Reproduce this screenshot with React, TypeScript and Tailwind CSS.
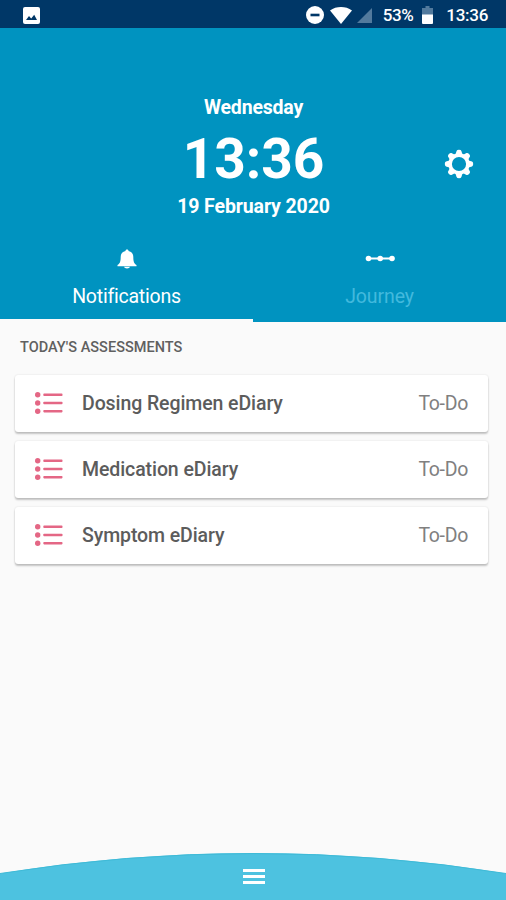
import { useState } from "react";
import clsx from "clsx";

type Tab = "notifications" | "journey";

interface Assessment {
  id: number;
  title: string;
  status: string;
}

const assessments: Assessment[] = [
  { id: 1, title: "Dosing Regimen eDiary", status: "To-Do" },
  { id: 2, title: "Medication eDiary", status: "To-Do" },
  { id: 3, title: "Symptom eDiary", status: "To-Do" },
];

function StatusBar() {
  return (
    <div className="flex h-7 shrink-0 items-center bg-[#003767] pt-[2px] pr-[18px] pl-[23px] text-white">
      <svg width="17" height="17" viewBox="0 0 17 17" aria-hidden="true">
        <rect width="17" height="17" rx="2" fill="#fff" />
        <path d="M3 13l3-4 2.200 2.600 3-3.900L14 13z" fill="#003767" />
      </svg>

      <div className="ml-auto flex items-center">
        <svg width="18" height="18" viewBox="0 0 18 18" aria-hidden="true">
          <circle cx="9" cy="9" r="9" fill="#fff" />
          <rect x="4.500" y="7.700" width="9" height="2.600" fill="#003767" />
        </svg>
        <svg className="ml-[6px]" width="22" height="17" viewBox="0 0 22 17" aria-hidden="true">
          <path d="M0 3.500C6.300-1.100 15.700-1.100 22 3.500L11 17z" fill="#fff" />
        </svg>
        <svg className="ml-[5px]" width="15" height="15" viewBox="0 0 15 15" aria-hidden="true">
          <path d="M15 0v15H0z" fill="#527a9d" />
        </svg>
        <span className="ml-[11px] text-[17px] leading-5 font-medium tracking-[-0.4px]">53%</span>
        <svg className="ml-[9px]" width="11" height="18" viewBox="0 0 11 18" aria-hidden="true">
          <path d="M3.500 0h4v2H11v7H0V2h3.500z" fill="#527a9d" />
          <path d="M0 8.500h11V17a1 1 0 0 1-1 1H1a1 1 0 0 1-1-1z" fill="#fff" />
        </svg>
        <span className="ml-[13px] text-[17px] leading-5 font-medium tracking-[-0.3px]">13:36</span>
      </div>
    </div>
  );
}

function GearIcon() {
  return (
    <svg width="30" height="30" viewBox="-15 -15 30 30" aria-hidden="true">
      <g fill="#fff">
        {[0, 45, 90, 135, 180, 225, 270, 315].map((angle) => (
          <path
            key={angle}
            d="M-3.500-9.500L-2.400-13Q-2-14.200 0-14.200T2.400-13L3.500-9.500z"
            transform={`rotate(${angle})`}
          />
        ))}
      </g>
      <circle r="8.900" fill="#0093c0" stroke="#fff" strokeWidth="3.600" />
    </svg>
  );
}

function BellIcon() {
  return (
    <svg width="20" height="20" viewBox="0 0 20 20" fill="#fff" aria-hidden="true">
      <path d="M10 0.500c1 0 1.500.6 1.500 1.400 3.300.8 4.800 3 4.800 6.100 0 4.500.7 6.500 3.200 8v1.300H.5V16c2.500-1.500 3.200-3.500 3.200-8 0-3.100 1.500-5.300 4.800-6.100C8.500 1.100 9 .5 10 .5z" />
      <path d="M7 17.800h6c-.4 1.200-1.500 1.700-3 1.700s-2.600-.5-3-1.700z" />
    </svg>
  );
}

function JourneyIcon() {
  return (
    <svg width="30" height="20" viewBox="0 0 30 20" fill="#fff" aria-hidden="true">
      <rect x="3" y="8.500" width="24" height="2" />
      <circle cx="3.500" cy="9.500" r="2.800" />
      <circle cx="15.200" cy="9.500" r="2.800" />
      <circle cx="27" cy="9.500" r="2.800" />
    </svg>
  );
}

function ListIcon() {
  return (
    <svg className="mb-[2px]" width="28" height="22" viewBox="0 0 28 22" fill="#e46785" aria-hidden="true">
      {[2.800, 11, 19.200].map((y) => (
        <g key={y}>
          <circle cx="2.700" cy={y} r="2.700" />
          <rect x="8.300" y={y - 1.200} width="19.200" height="2.400" rx="0.800" />
        </g>
      ))}
    </svg>
  );
}

function AssessmentCard({ assessment }: { assessment: Assessment }) {
  return (
    <button
      type="button"
      className="flex h-[57px] w-full items-center rounded-[3px] bg-white pt-px pr-5 pl-5 text-left shadow-[0_2px_2px_rgba(0,0,0,0.22),0_0_2px_rgba(0,0,0,0.12)]"
    >
      <ListIcon />
      <span className="ml-[19px] text-[19.500px] leading-6 font-medium tracking-[-0.09px] text-[#5c5c5c]">
        {assessment.title}
      </span>
      <span className="ml-auto text-[19.500px] leading-6 tracking-[-0.3px] text-[#808080]">
        {assessment.status}
      </span>
    </button>
  );
}

export default function App() {
  const [tab, setTab] = useState<Tab>("notifications");

  return (
    <div className="flex h-[900px] w-[506px] flex-col overflow-hidden bg-[#fafafa] font-[Roboto,sans-serif]">
      <StatusBar />

      {/* Clock and tabs */}
      <header className="flex h-[294px] shrink-0 flex-col bg-[#0093c0] text-white">
        <div className="grid h-[208px] grid-cols-[1fr_auto_1fr] pt-[68px]">
          <div />
          <div className="flex flex-col items-center pl-px font-bold">
            <div className="h-6 text-[19.500px] leading-6 tracking-[-0.2px]">Wednesday</div>
            <div className="h-[76px] text-[55px] leading-[78px]">13:36</div>
            <div className="h-[22px] text-[19.500px] leading-[22px] tracking-[-0.12px]">19 February 2020</div>
          </div>
          <button type="button" aria-label="Settings" className="mt-[53px] mr-8 self-start justify-self-end">
            <GearIcon />
          </button>
        </div>

        <nav className="grid flex-1 grid-cols-2">
          <button
            type="button"
            onClick={() => setTab("notifications")}
            className={clsx(
              "flex flex-col items-center border-b-[3px] pt-[13px]",
              tab === "notifications" ? "border-[#fafafa] text-white" : "border-transparent text-[#42b9dd]",
            )}
          >
            <BellIcon />
            <span className="mt-4 text-[19.500px] leading-6 tracking-[-0.22px]">Notifications</span>
          </button>
          <button
            type="button"
            onClick={() => setTab("journey")}
            className={clsx(
              "flex flex-col items-center border-b-[3px] pt-[13px]",
              tab === "journey" ? "border-[#fafafa] text-white" : "border-transparent text-[#42b9dd]",
            )}
          >
            <JourneyIcon />
            <span className="mt-4 text-[19.500px] leading-6 tracking-[-0.1px]">Journey</span>
          </button>
        </nav>
      </header>

      <main className="flex-1 pt-4 pr-[18px] pl-[15px]">
        <h2 className="pl-[5px] text-[14.500px] leading-5 font-medium tracking-[0.03px] text-[#606060]">
          TODAY'S ASSESSMENTS
        </h2>
        <div className="mt-[17px] flex flex-col gap-[9px]">
          {assessments.map((a) => (
            <AssessmentCard key={a.id} assessment={a} />
          ))}
        </div>
      </main>

      {/* Curved bottom menu */}
      <footer className="grid h-12 shrink-0 place-items-center">
        <svg className="col-start-1 row-start-1" width="506" height="48" viewBox="0 0 506 48" aria-hidden="true">
          <path d="M0 21.500Q126 1 253 1T506 21.500V48H0z" fill="#4dc2e0" />
          <path d="M0 21.500Q126 1.500 253 1.500T506 21.500" fill="none" stroke="#3fbad7" />
        </svg>
        <button type="button" aria-label="Menu" className="z-10 col-start-1 row-start-1 ml-px flex flex-col gap-[3px]">
          <span className="h-[3px] w-[22px] bg-white" />
          <span className="h-[3px] w-[22px] bg-white" />
          <span className="h-[3px] w-[22px] bg-white" />
        </button>
      </footer>
    </div>
  );
}
